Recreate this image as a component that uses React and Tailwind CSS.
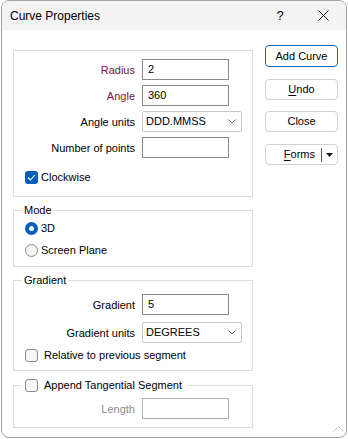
import { useState } from "react";

const FONT = { fontFamily: '"Liberation Sans", Arial, sans-serif' };

function TextRow({ label, value, labelClass = "text-black", width = "w-[87px]", inputClass = "border-[#8a8a8a]" }) {
  return (
    <div className="flex items-center">
      <div className={`w-[121px] text-right leading-[14px] ${labelClass}`}>{label}</div>
      <div className={`ml-[7px] h-[21px] ${width} border ${inputClass} bg-white flex items-center pl-[5px]`}>
        {value}
      </div>
    </div>
  );
}

function SelectRow({ label, value }) {
  return (
    <div className="flex items-center">
      <div className="w-[121px] text-right leading-[14px]">{label}</div>
      <div className="ml-[7px] h-[21px] w-[100px] border border-[#c8c8c8] rounded-[2px] bg-white flex items-center pl-[3px] pr-[5px]">
        <span className="flex-1">{value}</span>
        <svg width="8" height="5" viewBox="0 0 8 5">
          <polyline points="0.5,0.5 4,4 7.5,0.5" fill="none" stroke="#6a6a6a" strokeWidth="1" />
        </svg>
      </div>
    </div>
  );
}

function Checkbox({ checked }) {
  if (checked) {
    return (
      <span className="w-[13px] h-[13px] rounded-[3px] bg-[#005fb8] flex items-center justify-center shrink-0">
        <svg width="9" height="7" viewBox="0 0 9 7">
          <polyline points="1,3.5 3.4,6 8,1" fill="none" stroke="white" strokeWidth="1.1" />
        </svg>
      </span>
    );
  }
  return <span className="w-[13px] h-[13px] rounded-[3px] border border-[#8a8a8a] bg-[#f7f7f7] shrink-0" />;
}

function Radio({ checked }) {
  if (checked) {
    return (
      <span className="w-[13px] h-[13px] rounded-full bg-[#005fb8] flex items-center justify-center shrink-0">
        <span className="w-[5px] h-[5px] rounded-full bg-white" />
      </span>
    );
  }
  return <span className="w-[13px] h-[13px] rounded-full border border-[#8a8a8a] bg-[#f5f5f5] shrink-0" />;
}

function Button({ children, primary, className = "" }) {
  return (
    <div
      className={`w-[73px] rounded-[4px] border bg-white flex items-center justify-center ${
        primary ? "h-[22px] border-[#0067c0]" : "h-[21px] border-[#d0d0d0]"
      } ${className}`}
    >
      {children}
    </div>
  );
}

export default function App() {
  const [clockwise] = useState(true);

  return (
    <div className="w-[348px] h-[439px] bg-white text-[11px] text-black" style={FONT}>
      <div className="relative ml-[1px] w-[346px] h-[438px] border border-[#a3a3a3] rounded-[8px] overflow-hidden bg-white flex flex-col">
        {/* title bar */}
        <div className="h-[29px] bg-[#f3f3f3] flex items-center pl-[8px]">
          <span className="text-[12px] flex-1">Curve Properties</span>
          <span className="w-[40px] text-center text-[13px]">?</span>
          <span className="w-[46px] flex items-center justify-center">
            <svg width="11" height="11" viewBox="0 0 11 11">
              <path d="M0.5 0.5 L10.5 10.5 M10.5 0.5 L0.5 10.5" stroke="#1a1a1a" strokeWidth="1" />
            </svg>
          </span>
        </div>

        <div className="flex flex-1">
          {/* left column */}
          <div className="pl-[11px] pt-[20px] flex flex-col">
            <div className="w-[240px] h-[147px] border border-[#dcdcdc] pt-[8px] flex flex-col">
              <TextRow label="Radius" value="2" labelClass="text-[#7d1238]" />
              <div className="mt-[5px]">
                <TextRow label="Angle" value="360" labelClass="text-[#7d1238]" />
              </div>
              <div className="mt-[5px]">
                <SelectRow label="Angle units" value="DDD.MMSS" />
              </div>
              <div className="mt-[5px]">
                <TextRow label="Number of points" value="" />
              </div>
              <div className="mt-[13px] ml-[11px] flex items-center h-[13px]">
                <Checkbox checked={clockwise} />
                <span className="ml-[3px]">Clockwise</span>
              </div>
            </div>

            <fieldset className="mt-[5px] w-[240px] h-[65px] border border-[#dcdcdc]">
              <legend className="ml-[8px] px-[2px] leading-[16px]">Mode</legend>
              <div className="pt-[4px] ml-[11px] flex items-center h-[13px] box-content">
                <Radio checked />
                <span className="ml-[3px]">3D</span>
              </div>
              <div className="mt-[9px] ml-[11px] flex items-center h-[13px]">
                <Radio />
                <span className="ml-[3px]">Screen Plane</span>
              </div>
            </fieldset>

            <fieldset className="mt-[5px] w-[240px] h-[99px] border border-[#dcdcdc]">
              <legend className="ml-[8px] px-[2px] leading-[16px]">Gradient</legend>
              <div className="pt-[6px]">
                <TextRow label="Gradient" value="5" />
              </div>
              <div className="mt-[7px]">
                <SelectRow label="Gradient units" value="DEGREES" />
              </div>
              <div className="mt-[6px] ml-[11px] flex items-center h-[13px]">
                <Checkbox />
                <span className="ml-[6px]">Relative to previous segment</span>
              </div>
            </fieldset>

            <fieldset className="mt-[6px] w-[240px] h-[51px] border border-[#dcdcdc]">
              <legend className="ml-[8px] px-[3px] pr-[6px] h-[16px] flex items-center">
                <Checkbox />
                <span className="ml-[6px]">Append Tangential Segment</span>
              </legend>
              <div className="pt-[5px]">
                <TextRow label="Length" value="" labelClass="text-[#8c8c8c]" inputClass="border-[#b0b0b0] h-[20px]" />
              </div>
            </fieldset>
          </div>

          {/* right column */}
          <div className="ml-[12px] pt-[15px] flex flex-col">
            <Button primary>Add Curve</Button>
            <Button className="mt-[12px]">
              <span>
                <u className="underline-offset-2">U</u>ndo
              </span>
            </Button>
            <Button className="mt-[11px]">Close</Button>
            <div className="mt-[12px] w-[73px] h-[21px] rounded-[4px] border border-[#d0d0d0] bg-white flex items-center">
              <span className="flex-1 text-right pr-[6px]">
                <u className="underline-offset-2">F</u>orms
              </span>
              <span className="w-[1px] h-[14px] bg-[#5a5a5a]" />
              <span className="w-[15px] flex items-center justify-center">
                <svg width="7" height="4" viewBox="0 0 7 4">
                  <polygon points="0,0 7,0 3.5,4" fill="#1a1a1a" />
                </svg>
              </span>
            </div>
          </div>
        </div>

        {/* resize grip */}
        <svg className="absolute right-[2px] bottom-[5px]" width="11" height="6" viewBox="0 0 11 6">
          <polyline points="0.5,5.5 5.5,0.5 10.5,5.5" fill="none" stroke="#8a8a8a" strokeWidth="1" strokeDasharray="1 1" />
        </svg>
      </div>
    </div>
  );
}
